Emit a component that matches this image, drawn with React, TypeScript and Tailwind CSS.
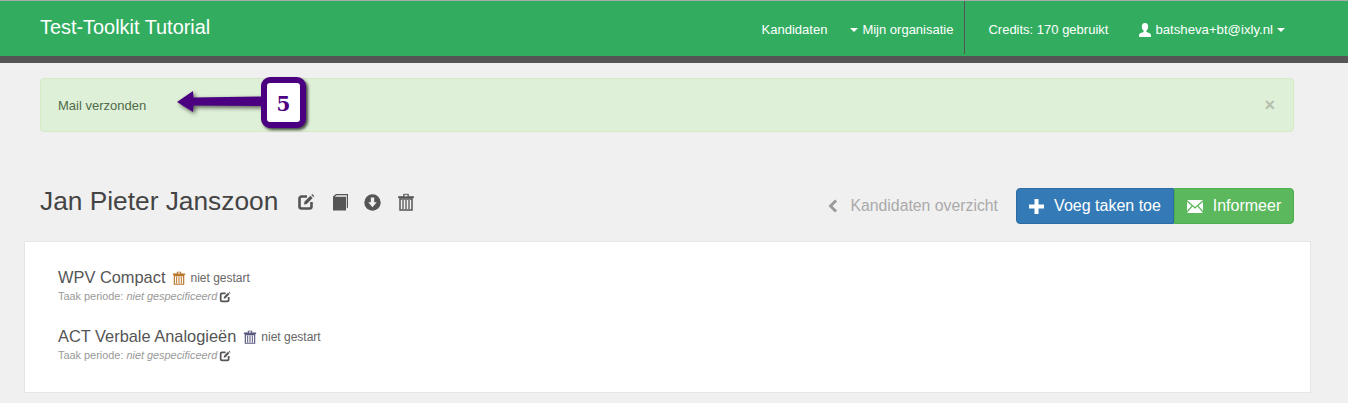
const Edit = ({ s = 18, c = "#555" }: { s?: number; c?: string }) => (
  <svg width={s} height={s} viewBox="0 0 18 18" className="shrink-0">
    <path d="M10 3.500H4.500A2 2 0 0 0 2.500 5.500v8a2 2 0 0 0 2 2h8a2 2 0 0 0 2-2V9" fill="none" stroke={c} strokeWidth="2.6" />
    <path d="M7 11.600 7.600 8.600 13.400 2.800 15.600 5 9.800 10.900Z" fill={c} />
    <path d="M14.300 1.900 15.200 1 17.400 3.200 16.500 4.100Z" fill={c} />
  </svg>
);
const Trash = ({ s = 18, c = "#555", bg = "#f0f0f0" }: { s?: number; c?: string; bg?: string }) => (
  <svg width={s} height={s} viewBox="0 0 18 18" className="shrink-0">
    <path d="M1.500 3.500h15v1.600h-15zM6.500 3.500V1.200h5v2.300" fill={c} stroke={c} strokeWidth="0.6" />
    <rect x="7.600" y="1.900" width="2.800" height="1.500" fill={bg} />
    <path d="M3 6h12v11H3z" fill="none" stroke={c} strokeWidth="1.500" />
    <path d="M6 7v9M9 7v9M12 7v9" stroke={c} strokeWidth="1.300" />
  </svg>
);
const Book = () => (
  <svg width="17" height="18" viewBox="0 0 17 18" className="shrink-0">
    <path d="M1 3.500 4 1h12v13.500l-1.200 1V2.300H4.600L2.800 3.800H14v13.700H1Z" fill="#555" />
  </svg>
);
const Down = () => (
  <svg width="17" height="17" viewBox="0 0 17 17" className="shrink-0">
    <circle cx="8.500" cy="8.500" r="8.200" fill="#555" />
    <path d="M6.800 3.600h3.400v4.600h2.600l-4.300 5-4.300-5h2.600z" fill="#f0f0f0" />
  </svg>
);
const Caret = () => <span className="inline-block w-0 h-0 border-x-[4px] border-x-transparent border-t-[4px] border-t-white" />;

const Task = ({ name, color }: { name: string; color: string }) => (
  <div className="h-[59px]">
    <div className="flex items-center h-[22px] text-[#555]">
      <span className="text-[16.4px] -mt-[2px]">{name}</span>
      <span className="ml-[7px]"><Trash s={14} c={color} bg="#fff" /></span>
      <span className="ml-[4px] text-[12px] text-[#666]">niet gestart</span>
    </div>
    <div className="flex items-center h-[15px] text-[10.9px] text-[#999]">
      <span>Taak periode:&nbsp;</span>
      <em>niet gespecificeerd</em>
      <span className="ml-[2px]"><Edit s={12} c="#555" /></span>
    </div>
  </div>
);

export default function App() {
  return (
    <div className="relative h-[403px] w-[1348px] overflow-hidden bg-[#f0f0f0] font-['Liberation_Sans',Arial,sans-serif]">
      <header className="h-[63px] border-t border-t-[#aaaaaa] border-b-[7px] border-b-[#555555] bg-[#32ad5f] text-white flex items-stretch pl-[40px]">
        <div className="flex-1 text-[19.9px] leading-[52px]">Test-Toolkit Tutorial</div>
        <nav className="flex items-start text-[13px] font-normal">
          <span className="leading-[57px] mr-[23px]">Kandidaten</span>
          <span className="flex items-center h-[57px] gap-[4px]"><Caret />Mijn organisatie</span>
          <span className="ml-[11px] w-px h-[53px] bg-[#555555]" />
          <span className="leading-[57px] ml-[23px]">Credits: 170 gebruikt</span>
          <span className="flex items-center h-[57px] ml-[30px] mr-[63px] gap-[3px]">
            <svg width="14" height="14" viewBox="0 0 14 14"><path d="M7 0c2.200 0 3.200 1.600 3.200 3.600 0 2-1 3.600-1.800 4.200v1.300c1.600.6 4.600 1.200 4.600 3.100V14H1v-1.800c0-1.900 3-2.500 4.600-3.100V7.800C4.800 7.200 3.800 5.600 3.800 3.600 3.800 1.600 4.800 0 7 0z" fill="#fff" /></svg>
            <span className="text-[13.2px] mr-[1px]">batsheva+bt@ixly.nl</span>
            <Caret />
          </span>
        </nav>
      </header>

      <main className="pl-[24px] pr-[37px]">
        <div className="ml-[16px] mr-[17px] mt-[15px] h-[54px] flex items-center justify-between rounded border border-[#d6e9c6] bg-[#dff0d8] pl-[17px] pr-[18px] text-[13px] text-[#4f6b4a]">
          <span className="mt-[1px]">Mail verzonden</span>
          <span className="text-[#b4bfae] text-[18px] font-bold leading-none">×</span>
        </div>

        <div className="ml-[16px] mr-[17px] mt-[56px] h-[53px] flex items-start justify-between">
          <div className="flex items-center h-[28px] text-[#444]">
            <h1 className="text-[26.3px] font-normal">Jan Pieter Janszoon</h1>
            <span className="ml-[19px]"><Edit /></span>
            <span className="ml-[17px]"><Book /></span>
            <span className="ml-[15px]"><Down /></span>
            <span className="ml-[16px]"><Trash /></span>
          </div>
          <div className="flex items-center">
            <svg width="10" height="14" viewBox="0 0 10 14"><path d="M8 0.500 10 2.500 5.500 7 10 11.500 8 13.500 1.500 7z" fill="#999" /></svg>
            <span className="ml-[13px] mr-[18px] text-[15.8px] text-[#aaa]">Kandidaten overzicht</span>
            <div className="flex h-[36px] text-white text-[16px]">
              <button className="w-[158px] flex items-center justify-center gap-[10px] rounded-l border border-[#2e6da4] bg-[#337ab7]">
                <svg width="15" height="15" viewBox="0 0 15 15"><path d="M5.500 0h4v5.500H15v4H9.500V15h-4V9.500H0v-4h5.500z" fill="#fff" /></svg>
                Voeg taken toe
              </button>
              <button className="w-[120px] flex items-center justify-center gap-[10px] rounded-r border border-[#4cae4c] bg-[#5cb85c]">
                <svg width="16" height="13" viewBox="0 0 16 13"><path d="M0 0h16L8 7zM0 1.800 4.500 5.800 0 11zM16 1.800 11.500 5.800 16 11zM5.500 6.600 8 8.800 10.500 6.600 16 13H0z" fill="#fff" /></svg>
                Informeer
              </button>
            </div>
          </div>
        </div>

        <section className="h-[152px] w-[1287px] border border-[#e6e6e6] bg-white pl-[33px] pt-[25px]">
          <Task name="WPV Compact" color="#b8762a" />
          <Task name="ACT Verbale Analogieën" color="#5a5a80" />
        </section>
      </main>

      <svg width="90" height="30" viewBox="0 0 90 30" className="absolute left-[174px] top-[87px] drop-shadow-[2px_2px_2px_rgba(0,0,0,0.6)]">
        <path d="M3 15 19 4 19.500 10.500 86 9.500a4 4 0 0 1 0 9.500L19.500 18.500 19 25z" fill="#4b0082" />
      </svg>
      <div className="absolute left-[261px] top-[77px] w-[45px] h-[51px] rounded-[9px] border-[6px] border-[#4b0082] bg-white flex items-center justify-center pt-[3px] text-[#4b0082] text-[20px] font-bold font-['DejaVu_Serif',serif] shadow-[2px_2px_3px_rgba(0,0,0,0.7)]">
        5
      </div>
    </div>
  );
}
